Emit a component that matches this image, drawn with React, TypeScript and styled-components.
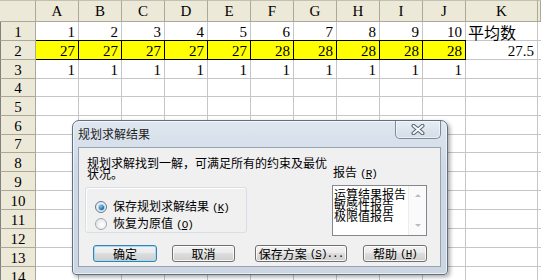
import React from "react";
import styled, { createGlobalStyle, css } from "styled-components";

const Global = createGlobalStyle`
  html, body { margin: 0; padding: 0; background: #fff; overflow: hidden; }
  body { width: 541px; height: 280px; }
`;

const SHEETFONT = '"Liberation Serif", "Noto Sans CJK SC", serif';
const MONO = '"Liberation Mono", monospace';
const CJK = '"Noto Sans CJK SC", "Noto Sans CJK JP", sans-serif';
const COLS = "36px repeat(10, 43px) 72px 1fr";

const Stage = styled.div`
  position: relative;
  width: 541px;
  height: 280px;
  overflow: hidden;
  background: #fff;
`;

const Sheet = styled.div`
  display: flex;
  flex-direction: column;
`;

const Row = styled.div<{ $h: number }>`
  display: grid;
  grid-template-columns: ${COLS};
  height: ${(p) => p.$h}px;
  flex: none;
`;

const HeadBase = css`
  box-sizing: border-box;
  background: #ece9d8;
  border-right: 1px solid #aca899;
  border-bottom: 1px solid #aca899;
  display: flex;
  align-items: center;
  justify-content: center;
  font-family: ${SHEETFONT};
  font-size: 15px;
  color: #000;
`;

const ColHead = styled.div`
  ${HeadBase};
  border-top: 1px solid #c4c1b2;
  padding-top: 1px;
`;

const RowHead = styled.div`
  ${HeadBase};
  border-left: 1px solid #808080;
  align-items: flex-end;
  line-height: 16px;
`;

const Cell = styled.div<{ $fill?: boolean; $left?: boolean; $cjk?: boolean }>`
  box-sizing: border-box;
  border-right: 1px solid #c6c6c6;
  border-bottom: 1px solid #c6c6c6;
  padding: 0 3px 0 2px;
  display: flex;
  align-items: flex-end;
  justify-content: ${(p) => (p.$left ? "flex-start" : "flex-end")};
  font-family: ${(p) => (p.$cjk ? CJK : SHEETFONT)};
  font-size: ${(p) => (p.$cjk ? 16 : 15)}px;
  line-height: 16px;
  color: #000;
  white-space: nowrap;
  ${(p) =>
    p.$fill &&
    css`
      background: #ffff00;
      border-color: #000;
      border-top: 1px solid #000;
      margin-top: -1px;
    `}
`;

/* ---------- Dialog ---------- */

const Dialog = styled.div`
  position: absolute;
  left: 72px;
  top: 120px;
  width: 376px;
  height: 155px;
  box-sizing: border-box;
  border: 1px solid #5f6f80;
  border-radius: 7px 7px 4px 4px;
  background: linear-gradient(#dfe7f0, #cfd9e5 30%, #cbd6e2);
  box-shadow: 2px 2px 4px rgba(0, 0, 0, 0.35), inset 0 0 0 1px rgba(255, 255, 255, 0.6);
  padding: 0 6px 7px 5px;
  display: flex;
  flex-direction: column;
  font-family: ${CJK};
  font-size: 12px;
  color: #000;
`;

const TitleBar = styled.div`
  height: 26px;
  flex: none;
  display: flex;
  align-items: flex-start;
  justify-content: space-between;
`;

const Title = styled.div`
  padding-top: 6px;
  line-height: 14px;
  font-size: 12px;
  color: #1e1e1e;
`;

const CloseBtn = styled.div`
  width: 46px;
  height: 18px;
  box-sizing: border-box;
  border: 1px solid #7d8a98;
  border-top: none;
  border-radius: 0 0 5px 5px;
  background: linear-gradient(#e6edf4, #d3dde8);
  box-shadow: inset 0 0 0 1px rgba(255, 255, 255, 0.55);
  display: flex;
  align-items: center;
  justify-content: center;
`;

const Client = styled.div`
  flex: 1;
  box-sizing: border-box;
  border: 1px solid #96a3b1;
  background: #f0f0f0;
  display: flex;
  flex-direction: column;
`;

const Body = styled.div`
  height: 97px;
  display: grid;
  grid-template-columns: 253px 1fr;
`;

const LeftCol = styled.div`
  display: flex;
  flex-direction: column;
`;

const Message = styled.div`
  margin: 9px 0 0 8px;
  width: 242px;
  line-height: 11px;
`;

const GroupBox = styled.div`
  margin: 8px 0 0 6px;
  width: 162px;
  height: 46px;
  box-sizing: border-box;
  border: 1px solid #d5dfe5;
  border-radius: 3px;
  box-shadow: inset 1px 1px 0 #fff;
  padding: 13px 0 0 9px;
  display: flex;
  flex-direction: column;
  gap: 5px;
`;

const RadioRow = styled.label`
  display: flex;
  align-items: center;
  gap: 6px;
  height: 12px;
  line-height: 12px;
`;

const Radio = styled.span<{ $on?: boolean }>`
  width: 12px;
  height: 12px;
  box-sizing: border-box;
  border-radius: 50%;
  border: 1px solid ${(p) => (p.$on ? "#5a7c95" : "#a3a8ad")};
  background: radial-gradient(circle at 60% 60%, #ffffff, #dcdfe3);
  display: flex;
  align-items: center;
  justify-content: center;
  flex: none;
  &::after {
    content: "";
    width: 5px;
    height: 5px;
    border-radius: 50%;
    display: ${(p) => (p.$on ? "block" : "none")};
    background: radial-gradient(circle at 40% 35%, #7cc7f2, #1f5c8c 70%);
    box-shadow: 0 0 0 1px #9fd2ef;
  }
`;

const Key = styled.span`
  font-family: ${MONO};
  font-size: 11px;
  letter-spacing: -1px;
  margin-left: 3px;
  u {
    text-underline-offset: 1px;
  }
`;

const RightCol = styled.div`
  display: flex;
  flex-direction: column;
  padding-top: 17px;
`;

const Label = styled.div`
  line-height: 14px;
  padding-left: 1px;
`;

const ListBox = styled.div`
  margin-top: 4px;
  width: 95px;
  height: 51px;
  box-sizing: border-box;
  border: 1px solid #828790;
  background: #fff;
  display: flex;
`;

const Items = styled.div`
  flex: 1;
  padding: 2px 0 0 1px;
  line-height: 11px;
  white-space: nowrap;
`;

const Scroll = styled.div`
  width: 17px;
  background: #fafafa;
  border-left: 1px solid #ededed;
  display: flex;
  flex-direction: column;
  justify-content: space-between;
  align-items: center;
  padding: 8px 0 8px;
`;

const Arrow = styled.span<{ $down?: boolean }>`
  width: 0;
  height: 0;
  border-left: 3px solid transparent;
  border-right: 3px solid transparent;
  ${(p) =>
    p.$down
      ? css`border-top: 3px solid #b8bcc0;`
      : css`border-bottom: 3px solid #b8bcc0;`}
`;

const Buttons = styled.div`
  height: 17px;
  display: flex;
  padding-left: 14px;
`;

const Button = styled.div<{ $w: number; $ml?: number; $default?: boolean }>`
  width: ${(p) => p.$w}px;
  margin-left: ${(p) => p.$ml ?? 0}px;
  height: 17px;
  box-sizing: border-box;
  border: 1px solid ${(p) => (p.$default ? "#3c7fb1" : "#707070")};
  border-radius: 3px;
  background: linear-gradient(#f2f2f2 0%, #ebebeb 45%, #dddddd 50%, #cfcfcf 100%);
  box-shadow: inset 0 0 0 1px ${(p) => (p.$default ? "#9fdcf7" : "rgba(255,255,255,0.8)")};
  display: flex;
  align-items: center;
  justify-content: center;
  line-height: 12px;
  white-space: nowrap;
`;

const colLetters = ["A", "B", "C", "D", "E", "F", "G", "H", "I", "J", "K", ""];
const rowHeights = [19, 19, 19, 18, 19, 19, 18, 19, 19, 19, 19, 19, 19, 19];

type CellData = { v: string; fill?: boolean; left?: boolean; cjk?: boolean };

function rowData(r: number): CellData[] {
  const cells: CellData[] = [];
  for (let c = 0; c < 12; c++) cells.push({ v: "" });
  if (r === 1) {
    for (let c = 0; c < 10; c++) cells[c] = { v: String(c + 1) };
    cells[10] = { v: "平均数", left: true, cjk: true };
  } else if (r === 2) {
    for (let c = 0; c < 10; c++) cells[c] = { v: c < 5 ? "27" : "28", fill: true };
    cells[10] = { v: "27.5" };
  } else if (r === 3) {
    for (let c = 0; c < 10; c++) cells[c] = { v: "1" };
  }
  return cells;
}

const CloseIcon = () => (
  <svg width="14" height="11" viewBox="0 0 14 11">
    <path d="M2.5 1.8 L11.5 9.2 M11.5 1.8 L2.5 9.2" stroke="#56626f" strokeWidth="4" strokeLinecap="round" />
    <path d="M2.5 1.8 L11.5 9.2 M11.5 1.8 L2.5 9.2" stroke="#f7f9fb" strokeWidth="2" strokeLinecap="round" />
  </svg>
);

export default function App() {
  return (
    <Stage>
      <Global />
      <Sheet>
        <Row $h={22}>
          <ColHead />
          {colLetters.map((l, i) => (
            <ColHead key={i}>{l}</ColHead>
          ))}
        </Row>
        {rowHeights.map((h, i) => (
          <Row $h={h} key={i}>
            <RowHead>{i + 1}</RowHead>
            {rowData(i + 1).map((c, j) => (
              <Cell key={j} $fill={c.fill} $left={c.left} $cjk={c.cjk}>
                {c.v}
              </Cell>
            ))}
          </Row>
        ))}
      </Sheet>

      <Dialog>
        <TitleBar>
          <Title>规划求解结果</Title>
          <CloseBtn>
            <CloseIcon />
          </CloseBtn>
        </TitleBar>
        <Client>
          <Body>
            <LeftCol>
              <Message>规划求解找到一解，可满足所有的约束及最优状况。</Message>
              <GroupBox>
                <RadioRow>
                  <Radio $on />
                  <span>
                    保存规划求解结果<Key>(<u>K</u>)</Key>
                  </span>
                </RadioRow>
                <RadioRow>
                  <Radio />
                  <span>
                    恢复为原值<Key>(<u>O</u>)</Key>
                  </span>
                </RadioRow>
              </GroupBox>
            </LeftCol>
            <RightCol>
              <Label>
                报告<Key>(<u>R</u>)</Key>
              </Label>
              <ListBox>
                <Items>
                  <div>运算结果报告</div>
                  <div>敏感性报告</div>
                  <div>极限值报告</div>
                </Items>
                <Scroll>
                  <Arrow />
                  <Arrow $down />
                </Scroll>
              </ListBox>
            </RightCol>
          </Body>
          <Buttons>
            <Button $w={64} $default>
              确定
            </Button>
            <Button $w={63} $ml={15}>
              取消
            </Button>
            <Button $w={92} $ml={20}>
              保存方案<Key>(<u>S</u>)...</Key>
            </Button>
            <Button $w={64} $ml={16}>
              帮助<Key>(<u>H</u>)</Key>
            </Button>
          </Buttons>
        </Client>
      </Dialog>
    </Stage>
  );
}
